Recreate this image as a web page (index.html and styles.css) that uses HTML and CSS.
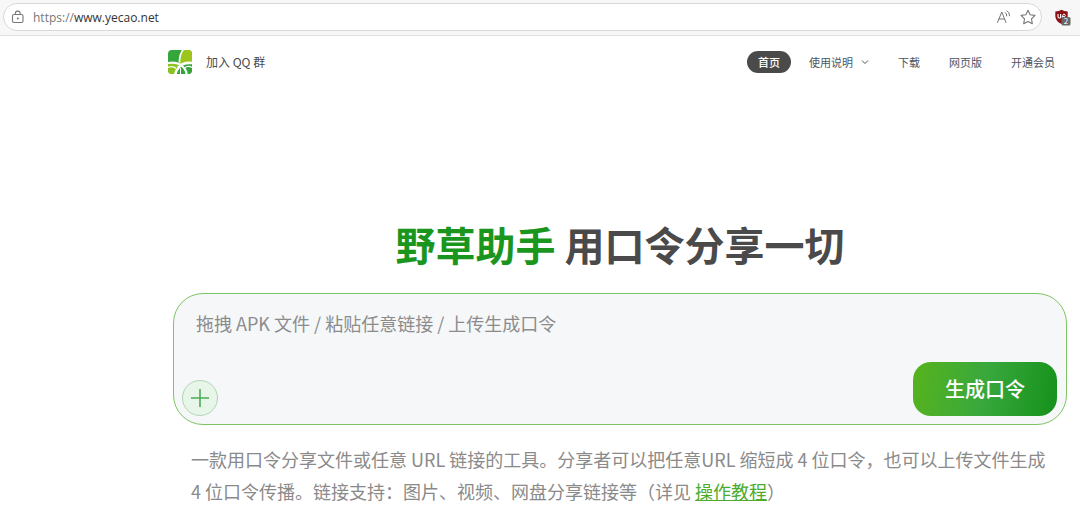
FILE: index.html
```html
<!DOCTYPE html>
<html lang="zh-CN">

<head>
  <meta charset="UTF-8">
  <meta name="viewport" content="width=device-width, initial-scale=1.0">
  <title>野草助手</title>
  <link rel="stylesheet" href="styles.css">
</head>

<body>
  <div class="browser-bar">
    <div class="address">
      <svg class="lock" viewBox="0 0 14 14" width="14" height="14" fill="none" stroke="#777" stroke-width="1.1">
        <rect x="1.5" y="4.5" width="10.5" height="8" rx="1.5" />
        <path d="M4.3 4.5V3.6a2.4 2.4 0 0 1 4.9 0v.9" />
        <circle cx="6.8" cy="8.5" r=".5" fill="#777" />
      </svg>
      <span class="url"><span class="scheme">https://</span>www.yecao.net</span>
      <button class="icon-btn" type="button" aria-label="朗读">
        <svg viewBox="0 0 16 16" width="16" height="16" fill="none" stroke="#777" stroke-linecap="round">
          <path d="M1.5 13.5 5.8 3l4.2 10.5M3 10h5.500M9.300 3.600q1.700 1 1.500 3.300M11 1.800q2.700 1.500 2.600 5" />
        </svg>
      </button>
      <button class="icon-btn" type="button" aria-label="收藏">
        <svg viewBox="0 0 16 16" width="16" height="16" fill="none" stroke="#777" stroke-width="1.1" stroke-linejoin="round">
          <path d="M8 1.300 10.100 5.700 15 6.400 11.500 9.800 12.300 14.700 8 12.400 3.700 14.700 4.500 9.800 1 6.400 5.900 5.700Z" />
        </svg>
      </button>
    </div>
    <button class="icon-btn" type="button" aria-label="扩展">
      <svg viewBox="0 0 17 17" width="17" height="17">
        <path d="M7.500.800Q10 2.600 13.700 2.600V7q0 5-6.200 8Q1.300 12 1.300 7V2.600Q5 2.600 7.500.800Z" fill="#8b1117" />
        <path d="M4 5v2.500q0 1.500 1.300 1.500T6.600 7.500V5M8.300 9V7" fill="none" stroke="#fff" stroke-width="1.1" />
        <circle cx="10" cy="6.500" r="1.300" fill="none" stroke="#fff" />
        <rect x="7.500" y="8" width="9" height="8.500" rx="1.500" fill="#666" />
        <text x="12" y="15" font-size="8" text-anchor="middle" fill="#fff">2</text>
      </svg>
    </button>
  </div>

  <header class="site-header">
    <a class="logo" href="#" aria-label="野草助手">
      <svg viewBox="0 0 24 24" width="24" height="24">
        <defs>
          <clipPath id="logo-shape"><rect width="24" height="24" rx="4" /></clipPath>
        </defs>
        <g clip-path="url(#logo-shape)">
          <rect width="24" height="24" fill="#34a63c" />
          <path d="M15 0H24V14H11.500Q11.500 5 15 0Z" fill="#9dc51c" />
          <path d="M0 13H12L7 24H0Z" fill="#8dc21f" />
          <path d="M15 13H24V24H19Z" fill="#34a63c" />
          <g fill="none" stroke="#fff">
            <path d="M15.500-1Q11 5 11.500 12.500" stroke-width="1.800" />
            <path d="M0 13Q9 11.500 14 16T18.500 25" stroke-width="2.200" />
            <path d="M24 13Q15 12 11 17T7.500 25" stroke-width="2.600" />
            <path d="M0 17.500Q5 15.500 8 18.500M24 17.500Q20 15 16.500 18" stroke-width="1.200" />
            <path d="M12.500 18V24" />
          </g>
        </g>
      </svg>
    </a>
    <a class="group-link" href="#">加入 QQ 群</a>
    <nav class="nav">
      <a class="active" href="#">首页</a>
      <a href="#">使用说明
        <svg viewBox="0 0 8 8" width="8" height="8" fill="none" stroke="#4b5563">
          <path d="M1 2.500 4 5.500 7 2.500" />
        </svg>
      </a>
      <a href="#">下载</a>
      <a href="#">网页版</a>
      <a href="#">开通会员</a>
    </nav>
  </header>

  <main class="main">
    <h1><span class="brand">野草助手</span> 用口令分享一切</h1>

    <form class="share-box">
      <textarea aria-label="分享内容" placeholder="拖拽 APK 文件 / 粘贴任意链接 / 上传生成口令"></textarea>
      <div class="actions">
        <button class="add" type="button" aria-label="上传文件">
          <svg viewBox="0 0 20 20" width="20" height="20" stroke="#4eaa58" stroke-width="1.600">
            <path d="M10 1V19M1 10H19" />
          </svg>
        </button>
        <button class="submit" type="button">生成口令</button>
      </div>
    </form>

    <p class="intro">一款用口令分享文件或任意 URL 链接的工具。分享者可以把任意URL 缩短成 4 位口令，也可以上传文件生成 4 位口令传播。链接支持：图片、视频、网盘分享链接等（详见 <a href="#">操作教程</a>）</p>
  </main>
</body>

</html>
```

FILE: styles.css
```css
* {
  box-sizing: border-box;
}

body {
  margin: 0;
  background: #fff;
  color: #4a4a4a;
  font-family: "Noto Sans CJK SC", sans-serif;
}

a {
  color: inherit;
  text-decoration: none;
}

button {
  border: none;
  padding: 0;
  font-family: inherit;
  cursor: pointer;
}

svg {
  display: block;
}

/* Browser toolbar */
.browser-bar {
  display: flex;
  align-items: center;
  gap: 12px;
  height: 36px;
  padding: 0 9px 1px 3px;
  background: #f7f7f7;
  border-bottom: 1px solid #dedede;
}

.address {
  flex: 1;
  display: flex;
  align-items: center;
  gap: 8px;
  height: 28px;
  padding: 0 5px 0 7px;
  background: #fff;
  border: 1px solid #d8d8d8;
  border-radius: 14px;
}

.url {
  flex: 1;
  color: #333;
  font-family: "Open Sans", sans-serif;
  font-size: 12px;
}

.scheme {
  color: #777;
}

.icon-btn {
  background: none;
}

/* Header */
.site-header {
  display: flex;
  align-items: center;
  height: 51px;
  padding: 0 14px 0 168px;
}

.group-link {
  margin-left: 14px;
  font-size: 12px;
}

.nav {
  display: flex;
  gap: 8px;
  margin-left: auto;
  color: #4b5563;
  font-size: 11px;
  line-height: 22px;
}

.nav a {
  display: flex;
  align-items: center;
  gap: 8px;
  padding: 0 11px;
  border-radius: 11px;
}

.nav a + a {
  padding: 0 11px 0 10px;
}

.nav .active {
  background: #4a4a4a;
  color: #fff;
  font-weight: 500;
}

/* Main */
.main {
  margin: 127px 13px 0 173px;
}

h1 {
  margin: 0 0 19px;
  font-size: 40px;
  font-weight: 700;
  line-height: 60px;
  text-align: center;
}

.brand {
  color: #1a961e;
}

.share-box {
  padding: 14px 9px 8px 8px;
  background: #f5f7f9;
  border: 1px solid #7fc462;
  border-radius: 30px;
}

textarea {
  display: block;
  width: 100%;
  height: 54px;
  padding: 1px 14px;
  background: none;
  border: none;
  outline: none;
  resize: none;
  font-family: inherit;
  font-size: 18px;
  line-height: 28px;
}

textarea::placeholder {
  color: #8c8c8c;
}

.actions {
  display: flex;
  justify-content: space-between;
  align-items: flex-end;
}

.add {
  display: flex;
  align-items: center;
  justify-content: center;
  width: 36px;
  height: 36px;
  background: #e8f5e9;
  border: 1px solid #afd6b3;
  border-radius: 50%;
}

.submit {
  padding: 0 32px;
  background: linear-gradient(100deg, #57b31c, #38a83d 50%, #15911a);
  border-radius: 18px;
  color: #fff;
  font-size: 20px;
  font-weight: 500;
  line-height: 54px;
}

.intro {
  margin: 18px 8px 0 18px;
  color: #8a8a8a;
  font-size: 18px;
  line-height: 32px;
}

.intro a {
  color: #4cab2b;
  text-decoration: underline;
}
```
